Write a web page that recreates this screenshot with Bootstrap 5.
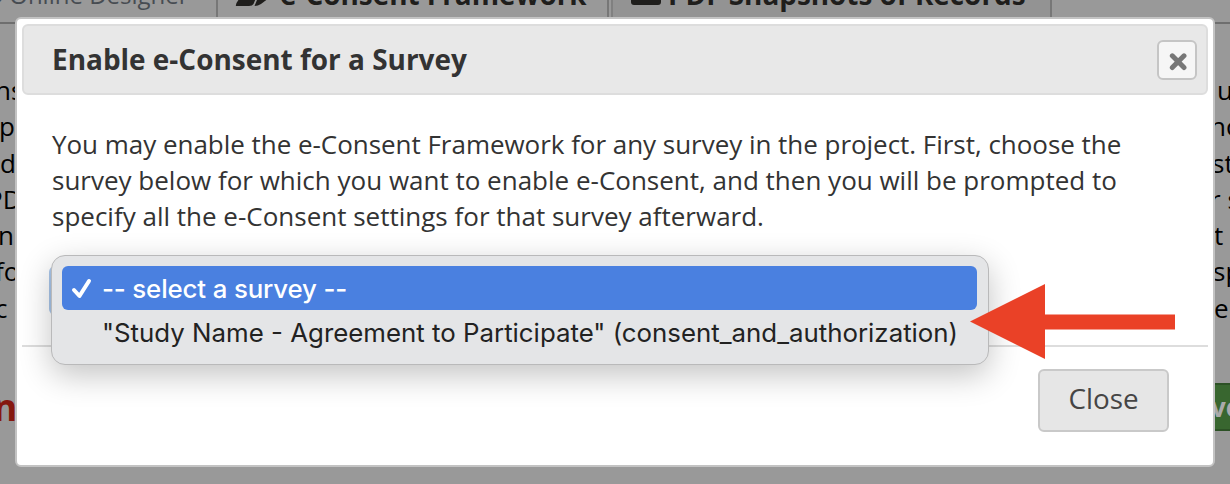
<!DOCTYPE html>
<html lang="en">
<head>
<meta charset="utf-8">
<title>Enable e-Consent for a Survey</title>
<link href="https://cdn.jsdelivr.net/npm/bootstrap@5.3.0/dist/css/bootstrap.min.css" rel="stylesheet">
<style>
body{font-family:"Open Sans",sans-serif;font-size:26px;line-height:36px;background:#999;color:#000;height:484px;overflow:hidden}
.tabs{height:24px;border-bottom:2px solid #6e6e6e;white-space:nowrap}
.tab-cell{height:24px;border-right:2px solid #777;line-height:36px;overflow:hidden;font-weight:700;font-size:27.9px;color:#1f1e1c}
.tab-cell span{margin-top:-24px}
.tab-one{width:218px;font-weight:400;font-size:24px;color:#474c52}
.tab-one span{margin-top:-23px}
.tab-two{width:391px;background:#999}
.tab-three{width:441px;background:#939393;border-left:2px solid #808080;margin-left:2px}
.page-lines{padding-top:48px}
.page-line{height:36.3px;white-space:pre}
.line-end{width:20px}
.notice{height:48px;font-size:37px;font-weight:700;color:#85170f;margin-top:57px}
.save-btn{width:30px;height:48px;font-size:26px;font-weight:700;background:#38662f;border:2px solid #2c5125;border-right:0;color:#aaa;line-height:44px;overflow:hidden;padding-left:9px}
.dialog-box{left:15px;top:17px;width:1200px;height:450px;border:2px solid #c3c3c3;border-radius:6px;padding:5px;color:#333}
.dialog-head{height:71px;background:#e8e8e8;border:2px solid #ddd;border-radius:6px;padding:0 9px 0 28px}
.dialog-title{font-size:27.95px;font-weight:700;line-height:36px;padding-bottom:1px}
.x-btn{width:40px;height:40px;background:#f6f6f6;border:2px solid #c5c5c5;border-radius:6px}
.dialog-text{padding:31px 30px 0;height:250px;white-space:nowrap}
.first-line{letter-spacing:-.033px}
.dialog-foot{border-top:2px solid #ddd;padding:22px 39px 0 0}
.close-btn{width:131px;height:63px;font-size:27.8px;line-height:36px;color:#454545;background:#e6e6e6;border:2px solid #c9c9c9;border-radius:6px}
.close-btn.p-0{padding-bottom:6px!important}
.select-edge{left:32px;top:247px;width:20px;height:49px;border-radius:6px;background:#a9c6ea}
.option-menu{left:34px;top:236px;width:938px;height:110px;border-radius:14px;background:#e4e5e7;border:1px solid #b9b9ba;padding:10px 11px 10px 10px;font-family:Inter,sans-serif;font-size:25.85px;color:#222;box-shadow:0 10px 32px rgba(0,0,0,.24);white-space:nowrap}
.option-row{height:44px;padding:2px 0 0 9px}
.option-row.chosen{background:#4a80e0;color:#fff;border-radius:6px;font-weight:500;letter-spacing:-.15px}
.tick{width:31px}
.pointer-arrow{left:953px;top:263px}
</style>
</head>
<body>
<nav class="tabs d-flex">
  <div class="tab-cell tab-one d-flex"><span style="margin-left:-3px">›</span><span style="margin-left:5px">Online Designer</span></div>
  <div class="tab-cell tab-two d-flex"><svg class="flex-shrink-0" width="62" height="8"><path d="M18 6 Q17 4 22 -2H38L35.500 4Q34.500 6 31 6ZM36.500 6 39 0 44-2H51L43 4Q40 6 36.500 6Z" fill="#1f1e1c"/></svg><span>e-Consent Framework</span></div>
  <div class="tab-cell tab-three d-flex"><svg class="flex-shrink-0" width="55" height="8"><rect x="18" y="-12" width="30" height="17" rx="3" fill="#1f1e1c"/></svg><span>PDF Snapshots of Records</span></div>
</nav>
<main class="page-lines">
  <div class="page-line d-flex justify-content-between"><span style="margin-left:-5px">ns</span><span class="line-end" style="width:13px">u</span></div>
  <div class="page-line d-flex justify-content-between"><span style="margin-left:-1px">p</span><span class="line-end">nc</span></div>
  <div class="page-line d-flex justify-content-between"><span>d</span><span class="line-end" style="width:18px">ste</span></div>
  <div class="page-line d-flex justify-content-between"><span style="margin-left:-13px">PD</span><span class="line-end">r s</span></div>
  <div class="page-line d-flex justify-content-between"><span style="margin-left:-2px">n</span><span class="line-end" style="width:16px">t</span></div>
  <div class="page-line d-flex justify-content-between"><span style="margin-left:-5px">fo</span><span class="line-end" style="width:17px">sp</span></div>
  <div class="page-line d-flex justify-content-between"><span style="margin-left:-5px">c</span><span class="line-end" style="width:16px">e</span></div>
  <div class="notice d-flex justify-content-between align-items-center"><span style="margin-left:-7px">n</span><span class="save-btn">ve</span></div>
</main>

<section class="dialog-box position-absolute bg-white" role="dialog" aria-labelledby="dialogTitle">
  <header class="dialog-head d-flex align-items-center justify-content-between">
    <h1 class="dialog-title mb-0" id="dialogTitle">Enable e-Consent for a Survey</h1>
    <button class="x-btn btn p-0 d-flex align-items-center justify-content-center" aria-label="Close dialog"><svg width="22" height="22"><path d="M5 6 18 19M18 6 5 19" stroke="#777" stroke-width="5.500" stroke-linecap="round" transform="translate(1.800 1.400) scale(.9)"/></svg></button>
  </header>
  <div class="dialog-text"><span class="first-line">You may enable the e-Consent Framework for any survey in the project. First, choose the</span><br><span>survey below for which you want to enable e-Consent, and then you will be prompted to</span><br><span>specify all the e-Consent settings for that survey afterward.</span></div>
  <footer class="dialog-foot d-flex justify-content-end"><button class="close-btn btn p-0">Close</button></footer>
  <div class="select-edge position-absolute"></div>
  <div class="option-menu position-absolute" role="listbox">
    <div class="option-row chosen d-flex align-items-center"><span class="tick d-flex"><svg width="22" height="24"><path d="M3 13 8.500 19 18 4" fill="none" stroke="#fff" stroke-width="4" stroke-linecap="round" stroke-linejoin="round"/></svg></span><span>-- select a survey --</span></div>
    <div class="option-row d-flex align-items-center"><span class="tick"></span><span>"Study Name - Agreement to Participate" (consent_and_authorization)</span></div>
  </div>
  <svg class="pointer-arrow position-absolute" width="206" height="78"><path d="M0 39.500 75 2V32.500H205V47.500H75V77Z" fill="#ea4127"/></svg>
</section>
<script src="https://cdn.jsdelivr.net/npm/bootstrap@5.3.0/dist/js/bootstrap.bundle.min.js"></script>
</body>
</html>
